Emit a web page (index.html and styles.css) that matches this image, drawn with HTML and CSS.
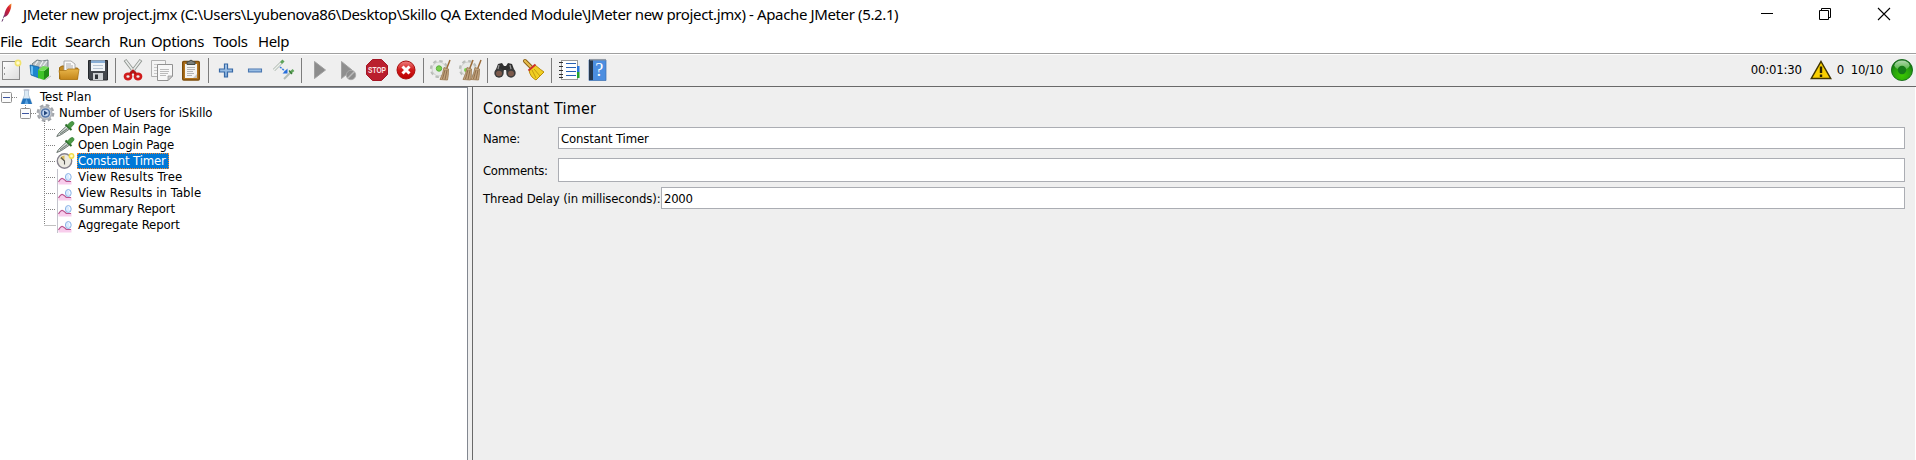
FILE: index.html
```html
<!DOCTYPE html>
<html lang="en">
<head>
<meta charset="utf-8">
<title>Apache JMeter (5.2.1)</title>
<link rel="stylesheet" href="styles.css">
</head>
<body>
<svg class="defs" width="0" height="0">
  <defs>
    <linearGradient id="gPaper" x1="0" y1="0" x2="1" y2="1"><stop offset="0" stop-color="#fff"/><stop offset="1" stop-color="#dcdcdc"/></linearGradient>
    <linearGradient id="gFolder" x1="0" y1="0" x2="0" y2="1"><stop offset="0" stop-color="#e8b54a"/><stop offset="1" stop-color="#c4861a"/></linearGradient>
    <linearGradient id="gBlue" x1="0" y1="0" x2="0" y2="1"><stop offset="0" stop-color="#b4d2f0"/><stop offset="1" stop-color="#7aa6d6"/></linearGradient>
    <linearGradient id="gRed" x1="0" y1="0" x2="0" y2="1"><stop offset="0" stop-color="#f08080"/><stop offset=".5" stop-color="#d01818"/><stop offset="1" stop-color="#b00"/></linearGradient>
    <radialGradient id="gGreen" cx=".5" cy=".75" r=".7"><stop offset="0" stop-color="#3cc800"/><stop offset=".6" stop-color="#27a010"/><stop offset="1" stop-color="#0b6a10"/></radialGradient>
    <linearGradient id="gShine" x1="0" y1="0" x2="0" y2="1"><stop offset="0" stop-color="#e4f8e0"/><stop offset="1" stop-color="#5cba50"/></linearGradient>
    <linearGradient id="gFeather" x1="1" y1="0" x2="0" y2="1"><stop offset="0" stop-color="#f69923"/><stop offset=".35" stop-color="#d82030"/><stop offset="1" stop-color="#8c2060"/></linearGradient>
    <symbol id="dropper" viewBox="0 0 19 16">
      <path d="M.8 15.500 2.500 12.500 10.500 5 13.500 8 5.500 13.500Z" fill="#dfe5e2" stroke="#68736d" stroke-width="1"/>
      <path d="M4 13 11.500 7.500" stroke="#7c8781" stroke-width="1.300"/>
      <path d="M9.500 3.500 15.500 9" stroke="#2c6b2b" stroke-width="2"/>
      <path d="M11 4.500 14.500 1Q18-.5 18 3L14 7.500Z" fill="#4b9a45" stroke="#2e7a2d" stroke-width=".7"/>
    </symbol>
    <symbol id="report" viewBox="0 0 16 16">
      <path d="M1.500 0V16" stroke="#c3c3cc" stroke-width="1"/>
      <path d="M2.500 15.500V13L6.500 9.500 9 12H15.500V15.500Z" fill="#f8cdec"/>
      <path d="M2.500 13Q5 8.500 7 9.700T10.500 12.500H15" fill="none" stroke="#bb5590" stroke-width="1.200"/>
      <ellipse cx="12.300" cy="8" rx="2.900" ry="3.500" fill="#d9ebff" stroke="#8db4e6"/>
      <path d="M12.500 5.500Q14 6 13.800 9" fill="none" stroke="#fff" stroke-width=".9"/>
    </symbol>
    <symbol id="gear" viewBox="0 0 20 18">
      <circle cx="10" cy="9" r="7.200" fill="none" stroke="#a2a5aa" stroke-width="3.400" stroke-dasharray="3.400 2.255"/>
      <circle cx="10" cy="9" r="6.300" fill="#d2d5d9" stroke="#b2b5ba" stroke-width="1.500"/>
      <circle cx="10" cy="9" r="4" fill="#c3d5ee" stroke="#5577aa" stroke-width="1.600"/>
      <path d="M8.500 6.500 12.300 9 8.500 11.500Z" fill="#23467c"/>
    </symbol>
    <symbol id="brushgear" viewBox="0 0 24 24">
      <circle cx="10" cy="11" r="7.600" fill="none" stroke="#b9bdb9" stroke-width="3" stroke-dasharray="3.300 2.669"/>
      <circle cx="10" cy="11" r="7" fill="#e8eae8" stroke="#c6c9c6" stroke-width=".8"/>
    </symbol>
    <symbol id="brush" viewBox="0 0 12 22">
      <path d="M11 1 7.500 10" stroke="#9a6a38" stroke-width="1.500"/>
      <path d="M5 8.500 9.500 10Q9.500 17 8.500 21L1 20.500Q4 15 5 8.500Z" fill="#c2a47e" stroke="#98764e" stroke-width=".8"/>
      <path d="M6 11 3.500 20M8 11 6 20.500" stroke="#806040" stroke-width=".8"/>
    </symbol>
    <symbol id="branch" viewBox="0 0 12 16">
      <path d="M.5 0V16M2 8.500H12" stroke="#808080" stroke-dasharray="1 1"/>
    </symbol>
  </defs>
</svg>

<div class="window">
  <header class="titlebar">
    <svg class="feather" width="12" height="20" viewBox="0 0 12 20"><path d="M10.500.5C6 3 3.500 8 3 14 6 14 8.500 10 10 5Z" fill="url(#gFeather)"/><path d="M3.500 12 2 16 .8 19" fill="none" stroke="#6b3b70" stroke-width="1" stroke-dasharray="3 1"/></svg>
    <h1 class="title">JMeter new project.jmx (C:\Users\Lyubenova86\Desktop\Skillo QA Extended Module\JMeter new project.jmx) - Apache JMeter (5.2.1)</h1>
    <div class="controls">
      <svg width="14" height="14" viewBox="0 0 14 14"><path d="M2 6.500H14" stroke="#000"/></svg>
      <svg width="14" height="14" viewBox="0 0 14 14"><path d="M1.500 3.500H10.500V12.500H1.500ZM3.500 3.500V1.500H12.500V10.500H10.500" fill="none" stroke="#000"/></svg>
      <svg width="14" height="14" viewBox="0 0 14 14"><path d="M1 1 13 13M13 1 1 13" stroke="#000" stroke-width="1.100"/></svg>
    </div>
  </header>

  <nav class="menubar">
    <span class="m-file">File</span><span class="m-edit">Edit</span><span class="m-search">Search</span><span class="m-run">Run</span><span class="m-options">Options</span><span class="m-tools">Tools</span><span class="m-help">Help</span>
  </nav>

  <div class="toolbar">
    <svg class="ico" viewBox="0 0 24 24"><rect x="3.500" y="3.500" width="17" height="18" fill="url(#gPaper)" stroke="#8a8a8a"/><path d="M5.500 9v2M5.500 15v2" stroke="#999"/><circle cx="19" cy="5" r="2.600" fill="#fffbd0" stroke="#f1e36c" stroke-width="1.600"/></svg>
    <svg class="ico" viewBox="0 0 24 24"><path d="M4 6 9 2 14 3 20 2 20 10 6 10Z" fill="#b9c0c2" stroke="#596b70" stroke-width=".8"/><path d="M7 7 10 3M12 8 15 3M15 8 19 3" stroke="#eef2f3" stroke-width="1.200"/><path d="M2 7 11 9V20L3 17Z" fill="#1c86cf" stroke="#0f5f9c" stroke-width=".7"/><path d="M3 8 5 8.500V17L3 16Z" fill="#6cc0f2"/><path d="M10 12 16 13V22L10 20Z" fill="#3fc42a"/><path d="M16 13 21 9V18L16 22Z" fill="#1f8f16"/><path d="M10 12 15 8 21 9 16 13Z" fill="#72dd55"/><path d="M17 22 23 18" stroke="#bbb"/></svg>
    <svg class="ico" viewBox="0 0 24 24"><path d="M2.500 21V9.500L5 8H9L11 10H20.500V21Z" fill="#c68b22" stroke="#9c6a10"/><path d="M7 3H14L18 6V15H7Z" fill="#fafafa" stroke="#999" stroke-width=".8"/><path d="M9 6H14M9 8H16M9 10H16" stroke="#aaa"/><path d="M2 12.500H9L11 11H22L20.500 21.500H3.500Z" fill="url(#gFolder)" stroke="#b07817" stroke-width=".8"/></svg>
    <svg class="ico" viewBox="0 0 24 24"><path d="M2.500 2.500H21.500V22H4L2.500 20.500Z" fill="#42464c" stroke="#24272b"/><path d="M5 2.500H19V13H5Z" fill="#f0f4f8"/><path d="M5 2.500H19V5H5Z" fill="#88aed6"/><path d="M7 7.500H17M7 10.500H17" stroke="#b7c4d2"/><path d="M7 15H17V22H7Z" fill="#cfd2d5"/><path d="M9 16.500H12V21H9Z" fill="#2f3338"/></svg>
    <i class="sep"></i>
    <svg class="ico" viewBox="0 0 24 24"><path d="M4 2 14 15M20 2 10 15" stroke="#8f9490" stroke-width="3.400"/><path d="M4.500 2.500 14 15M19.500 2.500 10 15" stroke="#e9ecea" stroke-width="1.700"/><ellipse cx="7" cy="18.500" rx="3" ry="2.700" fill="none" stroke="#d01c1c" stroke-width="2.700"/><ellipse cx="17" cy="18.500" rx="3" ry="2.700" fill="none" stroke="#d01c1c" stroke-width="2.700"/><path d="M9 16 12 13 15 16" fill="none" stroke="#b81414" stroke-width="2.500"/></svg>
    <svg class="ico" viewBox="0 0 24 24"><path d="M1.500 2.500H15.500V18.500H1.500Z" fill="#f4f4f4" stroke="#b0b0b0"/><path d="M4 6.500H12M4 9.500H7M4 12.500H7M4 15.500H7" stroke="#c9c9c9"/><path d="M7.500 6.500H22.500V18L18 22.500H7.500Z" fill="#f7f7f7" stroke="#929292"/><path d="M22.500 18H18V22.500Z" fill="#ccc" stroke="#929292" stroke-width=".7"/><path d="M10 11.500H19M10 13.500H19M10 15.500H18M10 17.500H16" stroke="#bbb"/></svg>
    <svg class="ico" viewBox="0 0 24 24"><rect x="3.700" y="3.500" width="16.600" height="18.500" rx="1" fill="#b0721c" stroke="#7d4d0c" stroke-width="1.400"/><path d="M6 6H18V20H6Z" fill="#f4f4f2"/><path d="M8 9.500H16M8 11.500H16M8 13.500H14M8 15.500H15M8 17.500H13" stroke="#b4b4b4"/><path d="M8 6.500V4L10 3.500Q12 .5 14 3.500L16 4V6.500Z" fill="#7b7f7b" stroke="#454a45"/><path d="M14 20 18 16V20Z" fill="#c8c8c4"/></svg>
    <i class="sep"></i>
    <svg class="ico" viewBox="0 0 24 24"><path d="M10.500 6H13.500V11H18.500V14H13.500V19H10.500V14H5.500V11H10.500Z" fill="url(#gBlue)" stroke="#3768a5" stroke-width="1.200"/></svg>
    <svg class="ico" viewBox="0 0 24 24"><path d="M5.500 11H18.500V14H5.500Z" fill="url(#gBlue)" stroke="#4a77b0" stroke-width="1.100"/></svg>
    <svg class="ico" viewBox="0 0 24 24"><path d="M2 12 9 5" stroke="#aeb8b0" stroke-width="3"/><path d="M2 12 9 5" stroke="#edf1ee" stroke-width="1.400"/><path d="M9 5 11.500 2.500" stroke="#5fa45b" stroke-width="3"/><path d="M12 21 18 15" stroke="#b4bdb6" stroke-width="2"/><path d="M18 15 21.500 12" stroke="#5fa45b" stroke-width="2.600"/><path d="M17 12.500 20 16" stroke="#3a7d37" stroke-width="1.300"/><path d="M8 9 14 14" stroke="#3a7de0" stroke-width="1.500" stroke-dasharray="2 1"/><path d="M15.500 10.500V15.500H10.500Z" fill="#276fdc"/></svg>
    <i class="sep"></i>
    <svg class="ico" viewBox="0 0 24 24"><path d="M7.500 3.500 18.500 12 7.500 20.500Z" fill="#8c8c8c" stroke="#a0a0a0"/></svg>
    <svg class="ico" viewBox="0 0 24 24"><path d="M5.500 3.500 16 12 5.500 20.500Z" fill="#8f8f8f" stroke="#a3a3a3"/><circle cx="15" cy="17" r="4.700" fill="#8d8d8d" stroke="#aaa"/><path d="M12 20 18 14" stroke="#bbb" stroke-width="1.500"/></svg>
    <svg class="ico" viewBox="0 0 24 24"><path d="M7.500 1.500H16.500L22.500 7.500V16.500L16.500 22.500H7.500L1.500 16.500V7.500Z" fill="#ba1f2e" stroke="#a31624"/><text class="stoptext" x="12" y="15.300" text-anchor="middle" textLength="18" lengthAdjust="spacingAndGlyphs">STOP</text></svg>
    <svg class="ico" viewBox="0 0 24 24"><circle cx="12" cy="12" r="9" fill="url(#gRed)" stroke="#a80f0f"/><path d="M8.500 8.500 15.500 15.500M15.500 8.500 8.500 15.500" stroke="#fff" stroke-width="3"/></svg>
    <i class="sep"></i>
    <svg class="ico" viewBox="0 0 24 24"><use href="#brushgear"/><circle cx="10" cy="10.500" r="2.700" fill="#7ad04c" stroke="#5cae40"/><use href="#brush" x="10" y="1" width="12" height="22"/></svg>
    <svg class="ico" viewBox="0 0 24 24"><use href="#brushgear"/><circle cx="8" cy="12" r="2" fill="#7ad04c"/><use href="#brush" x="4" y="1" width="12" height="22"/><use href="#brush" x="12" y="1" width="12" height="22"/></svg>
    <i class="sep"></i>
    <svg class="ico" viewBox="0 0 24 24"><path d="M5 6 9 5 11 8H13L15 5 19 6 22 14 14 15 13 12H11L10 15 2 14Z" fill="#303030"/><circle cx="6" cy="15" r="4.700" fill="#3a3a3a"/><circle cx="18" cy="15" r="4.700" fill="#3a3a3a"/><ellipse cx="6" cy="15.500" rx="3" ry="2.800" fill="#7c5a4c"/><ellipse cx="18" cy="15.500" rx="3" ry="2.800" fill="#7c5a4c"/><path d="M6 7 5 11M17 7 18 11" stroke="#929292" stroke-width="1.300"/></svg>
    <svg class="ico" viewBox="0 0 24 24"><path d="M3 3 9 9" stroke="#8a5e10" stroke-width="4" stroke-linecap="round"/><path d="M3 3 9 9" stroke="#e6bd50" stroke-width="2.200" stroke-linecap="round"/><path d="M7 12 13 7Q19 12 22 14L14 22Q8 19 7 12Z" fill="#f0cf22" stroke="#b88c0a"/><path d="M6.500 12.500 13.500 6.500" stroke="#cf302a" stroke-width="2"/><path d="M10 12 14 20M12 11 18 18" stroke="#c49c10"/></svg>
    <i class="sep"></i>
    <svg class="ico" viewBox="0 0 24 24"><rect x="4.500" y="2.500" width="16" height="19" fill="#fff" stroke="#9b9b9b"/><path d="M20 8H22.500V14H20Z" fill="#2b77dc"/><path d="M20 14H22.500V20H20Z" fill="#25a52d"/><path d="M2 4.500H6M2 8.500H6M2 12.500H6M2 16.500H6M2 19.500H6" stroke="#333" stroke-width="1.100"/><path d="M9 5.500H19M9 9.500H19M9 13.500H19M9 17.500H19" stroke="#2861b5" stroke-width="1"/></svg>
    <svg class="ico" viewBox="0 0 24 24"><path d="M3 2H20V22.500H3Z" fill="#4c8ee0" stroke="#3c6eae" stroke-width=".7"/><path d="M3 1.500H7V22H3Z" fill="#26384e"/><path d="M4 1.700H20" stroke="#929ba6" stroke-width="1.500"/><text class="qtext" x="13.300" y="18" text-anchor="middle">?</text></svg>
    <div class="status">
      <span class="s-time">00:01:30</span>
      <svg class="warn" width="22" height="20" viewBox="0 0 22 20"><path d="M11 1.500 20.700 18.500H1.300Z" fill="#f9cf00" stroke="#413500" stroke-width="1.500"/><path d="M11 6.500V13M11 14.500V17" stroke="#2b2400" stroke-width="2.400"/></svg>
      <span class="s-err">0</span>
      <span class="s-threads">10/10</span>
      <svg class="lamp" width="22" height="22" viewBox="0 0 22 22"><circle cx="11" cy="11" r="10.600" fill="url(#gGreen)" stroke="#0f6414" stroke-width=".8"/><ellipse cx="11" cy="6.200" rx="7.600" ry="4.600" fill="url(#gShine)" opacity=".75"/><circle cx="11" cy="11" r="4.200" fill="#157a18"/></svg>
    </div>
  </div>

  <main class="split">
    <section class="tree">
      <div class="row r0"><svg viewBox="0 0 18 16" width="18" height="16"><path d="M11 8.500H17" stroke="#888" stroke-dasharray="1 1"/><rect x=".5" y="3.500" width="10" height="10" rx="1" fill="#fbfbfb" stroke="#919191"/><path d="M2 8.500H9" stroke="#3c55a0"/></svg><svg class="nico" width="20" height="16" viewBox="2.500 0 20 16"><path d="M8 1V6L4.500 14.500H15.500L12 6V1Z" fill="#dceaf5" stroke="#b4c6d6" stroke-width=".9"/><path d="M6.500 9.500H13.500L15.500 15H4.500Z" fill="#2373bd"/><path d="M10 9.500 12 15H8Z" fill="#5ba3e0"/><path d="M7 1H13" stroke="#bbc"/></svg><span class="n-plan">Test Plan</span></div>
      <div class="row r1"><svg viewBox="0 0 16 16" width="16" height="16"><path d="M5.500 0V3M11 8.500H16" stroke="#888" stroke-dasharray="1 1"/><rect x=".5" y="3.500" width="10" height="10" rx="1" fill="#fbfbfb" stroke="#919191"/><path d="M2 8.500H9" stroke="#3c55a0"/></svg><svg class="nico" width="20" height="16" viewBox="0 0 20 16"><use href="#gear" x="-.5" y="-1" width="20" height="18"/></svg><span class="n-group">Number of Users for iSkillo</span></div>
      <div class="kids">
        <div class="row"><svg width="12" height="16"><use href="#branch" width="12" height="16"/></svg><svg class="nico" width="20" height="16"><use href="#dropper" width="19" height="16"/></svg><span class="n-main">Open Main Page</span></div>
        <div class="row"><svg width="12" height="16"><use href="#branch" width="12" height="16"/></svg><svg class="nico" width="20" height="16"><use href="#dropper" width="19" height="16"/></svg><span class="n-login">Open Login Page</span></div>
        <div class="row"><svg width="12" height="16"><use href="#branch" width="12" height="16"/></svg><svg class="nico" width="20" height="16" viewBox="0 0 20 16"><circle cx="8.500" cy="8" r="7.200" fill="#eceae2" stroke="#85818c" stroke-width="1.400"/><path d="M8.500 8V2.500A5.500 5.500 0 0 0 4 5.500Z" fill="#d9bd62"/><path d="M5 4.500 8.500 8V11.500" fill="none" stroke="#555" stroke-width="1.100"/><circle cx="15.500" cy="3" r="2.200" fill="#fffccc" stroke="#f2dc48" stroke-width="1.500"/></svg><span class="n-timer selected">Constant Timer</span></div>
        <div class="row"><svg width="12" height="16"><use href="#branch" width="12" height="16"/></svg><svg class="nico" width="20" height="16"><use href="#report" width="16" height="16"/></svg><span class="n-vtree">View Results Tree</span></div>
        <div class="row"><svg width="12" height="16"><use href="#branch" width="12" height="16"/></svg><svg class="nico" width="20" height="16"><use href="#report" width="16" height="16"/></svg><span class="n-vtable">View Results in Table</span></div>
        <div class="row"><svg width="12" height="16"><use href="#branch" width="12" height="16"/></svg><svg class="nico" width="20" height="16"><use href="#report" width="16" height="16"/></svg><span class="n-sum">Summary Report</span></div>
        <div class="row"><svg width="12" height="16"><path d="M.5 0V8M.5 8.500H12" stroke="#808080" stroke-dasharray="1 1"/></svg><svg class="nico" width="20" height="16"><use href="#report" width="16" height="16"/></svg><span class="n-agg">Aggregate Report</span></div>
      </div>
    </section>
    <section class="panel">
      <h2 class="heading">Constant Timer</h2>
      <div class="field f-name"><label>Name:</label><div class="input"><span class="v-name">Constant Timer</span></div></div>
      <div class="field f-comments"><label>Comments:</label><div class="input"></div></div>
      <div class="field f-delay"><label>Thread Delay (in milliseconds):</label><div class="input"><span class="v-delay">2000</span></div></div>
    </section>
  </main>
</div>
</body>
</html>
```
FILE: styles.css
```css
* { box-sizing: border-box; }
body { margin: 0; background: #fff; color: #000; font: 13px/16px "DejaVu Sans Condensed", "DejaVu Sans", sans-serif; font-stretch: condensed; letter-spacing: -0.3px; white-space: nowrap; overflow: hidden; }
svg { display: block; flex: none; }
.defs { position: absolute; }
.window { display: flex; flex-direction: column; width: 1916px; height: 460px; }
.titlebar { display: flex; align-items: center; height: 30px; padding-left: 1px; }
.feather { margin: -4px 10px 0 0; }
.title { margin: 0; padding-bottom: 2px; font: 400 15px/28px "Noto Sans", sans-serif; letter-spacing: -0.37px; }
.controls { display: flex; gap: 45px; margin-left: auto; margin-right: 25px; padding-bottom: 2px; }
.menubar { display: flex; height: 23px; font: 15px/23px "Noto Sans", sans-serif; letter-spacing: -0.4px; }
.m-file { width: 31px; }
.m-edit { width: 34px; }
.m-search { width: 54px; }
.m-run { width: 32px; }
.m-options { width: 62px; }
.m-tools { width: 45px; }
.toolbar { display: flex; align-items: center; gap: 5px; height: 34px; background: #efefef; border-top: 1px solid #a0a0a0; border-bottom: 1px solid #696969; box-shadow: inset 0 1px #fff; }
.toolbar .ico { width: 24px; height: 24px; overflow: visible; }
.toolbar .ico:first-child { margin-left: -1px; }
.sep { width: 1px; height: 25px; background: #7c7c7c; }
.stoptext { font: bold 9px "Liberation Sans", sans-serif; fill: #fbe3e5; letter-spacing: 0; }
.qtext { font: 18px "Liberation Serif", serif; fill: #fff; letter-spacing: 0; }
.status { display: flex; align-items: center; margin-left: auto; padding-right: 3px; }
.warn { margin: 0 5px 0 8px; }
.s-time { letter-spacing: -0.2px; }
.s-err { margin-right: 7px; }
.lamp { margin-left: 8px; }
.split { display: flex; flex: 1; background: #efefef; }
.tree { width: 468px; padding-top: 1px; background: #fff; border-top: 1px solid #828790; border-right: 1px solid #828790; }
.row { display: flex; align-items: center; height: 16px; }
.r0 { padding-left: 1px; }
.r1 { padding-left: 20px; }
.nico { margin-right: 2px; overflow: visible; }
.r0 .nico { margin-right: 1px; }
.r1 .nico { margin-right: 3px; }
.kids { padding-left: 44px; }
.n-plan { letter-spacing: 0; }
.n-group { letter-spacing: -0.11px; }
.n-main { letter-spacing: -0.15px; }
.n-login { letter-spacing: -0.17px; }
.n-timer { letter-spacing: -0.14px; }
.n-vtree { letter-spacing: 0.17px; }
.n-vtable { letter-spacing: 0.07px; }
.n-sum { letter-spacing: -0.14px; }
.n-agg { letter-spacing: -0.1px; }
.selected { height: 16px; width: 92px; padding-left: 1px; margin-left: -1px; background: #0078d7; color: #fff; outline: 1px dotted #ff8728; outline-offset: -1px; }
.panel { flex: 1; margin-left: 4px; border-left: 1px solid #696969; border-right: 1px solid #fff; padding: 14px 10px 0; }
.heading { margin: 0 0 10px; font: 400 16px/16px "DejaVu Sans Condensed", sans-serif; letter-spacing: 0.2px; }
.field { display: flex; align-items: center; }
.input { flex: 1; height: 100%; display: flex; align-items: center; padding: 1px 0 0 2px; background: #fff; border: 1px solid #abadb3; }
.field label { padding-top: 1px; }
.v-name { letter-spacing: -0.15px; }
.f-name { height: 22px; margin-bottom: 9px; }
.f-comments { height: 24px; margin-bottom: 5px; }
.f-name label, .f-comments label { width: 75px; }
.f-delay { height: 22px; }
.f-delay label { width: 178px; letter-spacing: -0.13px; }
```
